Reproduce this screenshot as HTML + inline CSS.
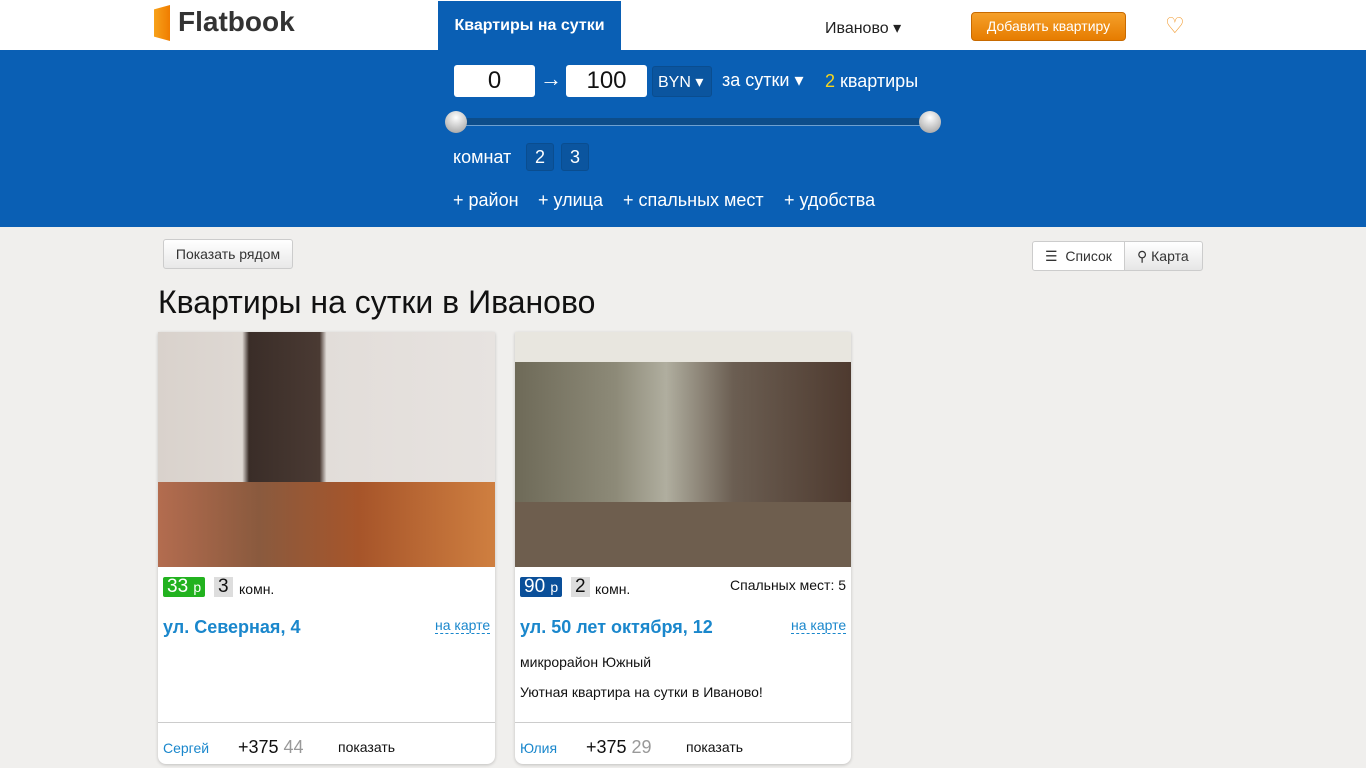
<!DOCTYPE html>
<html><head><meta charset="utf-8"><style>
*{box-sizing:border-box;margin:0;padding:0}
body{width:1366px;height:768px;overflow:hidden;background:#f0efed;font-family:"Liberation Sans",sans-serif;position:relative}
.a{position:absolute}
.hdr{left:0;top:0;width:1366px;height:50px;background:#fff}
.blue{left:0;top:50px;width:1366px;height:177px;background:#0a5fb4}
.inp{background:#fff;border-radius:3px;height:32px;font-size:24px;text-align:center;line-height:32px;color:#111}
.w{color:#fff}
.card{background:#fff;border-radius:0 0 8px 8px;box-shadow:0 1px 3px rgba(0,0,0,.2);overflow:hidden}
.addr{color:#1a87cc;font-weight:bold;font-size:18px}
.link{color:#1a87cc;font-size:14px;border-bottom:1px dashed #1a87cc}
</style></head><body>
<div class="a hdr"></div>
<div class="a" style="left:154px;top:5px;width:16px;height:36px;background:linear-gradient(90deg,#f7a21b,#f07d00);clip-path:polygon(0 12%,100% 0,100% 100%,0 88%)"></div>
<div class="a" style="left:178px;top:6px;font-size:28px;font-weight:bold;color:#333">Flatbook</div>
<div class="a" style="left:438px;top:1px;width:183px;height:50px;background:#0a5fb4;color:#fff;font-weight:bold;font-size:16px;text-align:center;line-height:50px">Квартиры на сутки</div>
<div class="a" style="left:825px;top:18px;font-size:16px;color:#222">Иваново ▾</div>
<div class="a" style="left:971px;top:12px;width:155px;height:29px;background:linear-gradient(#f5a02a,#e67c00);border:1px solid #c86a00;border-radius:4px;color:#fff;font-size:14px;text-align:center;line-height:27px">Добавить квартиру</div>
<div class="a" style="left:1165px;top:13px;font-size:22px;color:#f29a2e">♡</div>
<div class="a blue"></div>
<div class="a inp" style="left:454px;top:65px;width:81px">0</div>
<div class="a w" style="left:540px;top:66px;font-size:22px">→</div>
<div class="a inp" style="left:566px;top:65px;width:81px">100</div>
<div class="a w" style="left:652px;top:66px;width:60px;height:31px;background:#0b559f;border:1px solid #0a4d8f;border-radius:3px;font-size:16px;padding:5px 0 0 5px">BYN ▾</div>
<div class="a w" style="left:722px;top:70px;font-size:18px">за сутки ▾</div>
<div class="a w" style="left:825px;top:71px;font-size:18px"><span style="color:#f7d51d">2</span> квартиры</div>
<div class="a" style="left:450px;top:118px;width:486px;height:8px;background:#0d4d8a;border-bottom:1px solid #6ea0d0"></div>
<div class="a" style="left:445px;top:111px;width:22px;height:22px;border-radius:50%;background:radial-gradient(circle at 50% 30%,#fff,#999)"></div>
<div class="a" style="left:919px;top:111px;width:22px;height:22px;border-radius:50%;background:radial-gradient(circle at 50% 30%,#fff,#999)"></div>
<div class="a w" style="left:453px;top:147px;font-size:18px">комнат</div>
<div class="a w" style="left:526px;top:143px;width:28px;height:28px;background:#0b559f;border:1px solid #0a4d8f;border-radius:3px;font-size:18px;text-align:center;line-height:26px">2</div>
<div class="a w" style="left:561px;top:143px;width:28px;height:28px;background:#0b559f;border:1px solid #0a4d8f;border-radius:3px;font-size:18px;text-align:center;line-height:26px">3</div>
<div class="a w" style="left:453px;top:190px;font-size:18px">+ район</div>
<div class="a w" style="left:538px;top:190px;font-size:18px">+ улица</div>
<div class="a w" style="left:623px;top:190px;font-size:18px">+ спальных мест</div>
<div class="a w" style="left:784px;top:190px;font-size:18px">+ удобства</div>
<div class="a" style="left:163px;top:239px;width:130px;height:30px;background:linear-gradient(#fff,#e8e8e8);border:1px solid #ccc;border-radius:3px;font-size:14px;color:#333;text-align:center;line-height:28px">Показать рядом</div>
<div class="a" style="left:1032px;top:241px;width:93px;height:30px;background:#fff;border:1px solid #ccc;border-radius:3px 0 0 3px;font-size:14px;color:#333;line-height:28px;padding-left:12px">☰&nbsp; Список</div>
<div class="a" style="left:1124px;top:241px;width:79px;height:30px;background:linear-gradient(#fff,#e6e6e6);border:1px solid #ccc;border-radius:0 3px 3px 0;font-size:14px;color:#333;line-height:28px;padding-left:12px">⚲ Карта</div>
<div class="a" style="left:158px;top:284px;font-size:32px;color:#111">Квартиры на сутки в Иваново</div>

<div class="a card" style="left:158px;top:332px;width:337px;height:432px">
<div style="height:235px;background:linear-gradient(90deg,#d9d2cc 0,#ded8d3 25%,#3a2d28 27%,#4a3a33 48%,#e2ddd9 50%,#e7e3e0 100%);position:relative"><div class="a" style="left:0;top:150px;width:337px;height:85px;background:linear-gradient(90deg,#b36c4f,#8a5a3e 30%,#a7552a 60%,#cf7f40)"></div></div>
<div class="a" style="left:5px;top:245px;background:#22b21f;color:#fff;font-size:19px;padding:0 4px;border-radius:2px;line-height:20px">33 <span style="font-size:14px">р</span></div>
<div class="a" style="left:56px;top:245px;background:#ddd;font-size:19px;padding:0 4px;line-height:20px;color:#111">3</div>
<div class="a" style="left:81px;top:249px;font-size:14px;color:#111">комн.</div>
<div class="a addr" style="left:5px;top:285px">ул. Северная, 4</div>
<div class="a link" style="left:277px;top:285px">на карте</div>
<div class="a" style="left:0;top:390px;width:337px;border-top:1px solid #ccc"></div>
<div class="a" style="left:5px;top:408px;font-size:14px;color:#1a87cc">Сергей</div>
<div class="a" style="left:80px;top:405px;font-size:18px;color:#111">+375 <span style="color:#999">44</span></div>
<div class="a" style="left:180px;top:407px;font-size:14px;color:#111">показать</div>
</div>

<div class="a card" style="left:515px;top:332px;width:336px;height:432px">
<div style="height:235px;background:linear-gradient(90deg,#6e6a58,#8d8a78 30%,#b0ae9f 45%,#6b5e52 65%,#4e3a2f 100%);position:relative"><div class="a" style="left:0;top:170px;width:336px;height:65px;background:#6e5e4e"></div><div class="a" style="left:0;top:0;width:336px;height:30px;background:#e8e6df"></div></div>
<div class="a" style="left:5px;top:245px;background:#0a4f99;color:#fff;font-size:19px;padding:0 4px;border-radius:2px;line-height:20px">90 <span style="font-size:14px">р</span></div>
<div class="a" style="left:56px;top:245px;background:#ddd;font-size:19px;padding:0 4px;line-height:20px;color:#111">2</div>
<div class="a" style="left:80px;top:249px;font-size:14px;color:#111">комн.</div>
<div class="a" style="left:215px;top:245px;font-size:14px;color:#111">Спальных мест: 5</div>
<div class="a addr" style="left:5px;top:285px">ул. 50 лет октября, 12</div>
<div class="a link" style="left:276px;top:285px">на карте</div>
<div class="a" style="left:5px;top:322px;font-size:14px;color:#111">микрорайон Южный</div>
<div class="a" style="left:5px;top:352px;font-size:14px;color:#111">Уютная квартира на сутки в Иваново!</div>
<div class="a" style="left:0;top:390px;width:336px;border-top:1px solid #ccc"></div>
<div class="a" style="left:5px;top:408px;font-size:14px;color:#1a87cc">Юлия</div>
<div class="a" style="left:71px;top:405px;font-size:18px;color:#111">+375 <span style="color:#999">29</span></div>
<div class="a" style="left:171px;top:407px;font-size:14px;color:#111">показать</div>
</div>
</body></html>
